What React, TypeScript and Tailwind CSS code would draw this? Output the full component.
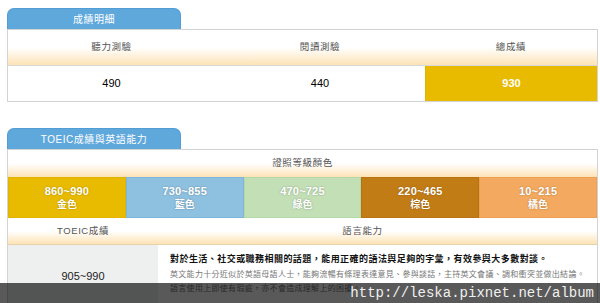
import React from "react";

const cjk = { fontFamily: '"Liberation Sans", "Noto Sans CJK TC", sans-serif' };

const headerBg =
  "bg-[linear-gradient(to_bottom,#ffffff_0%,#ffffff_50%,#fde3b6_100%)]";

function Tab({ label }: { label: string }) {
  return (
    <div className="w-[174px] h-[21px] rounded-t-[7px] bg-[#5fa8dc] border border-b-0 border-[#529dd6] flex items-center justify-center text-white text-[10px] tracking-[0.5px]">
      {label}
    </div>
  );
}

const levels = [
  { range: "860~990", name: "金色", bg: "bg-[#e9bb00]", br: "border-[#e2b300]" },
  { range: "730~855", name: "藍色", bg: "bg-[#8ec0e0]", br: "border-[#7fb5db]" },
  { range: "470~725", name: "綠色", bg: "bg-[#c2dfb6]", br: "border-[#b3d9a6]" },
  { range: "220~465", name: "棕色", bg: "bg-[#c27c15]", br: "border-[#b87212]" },
  { range: "10~215", name: "橘色", bg: "bg-[#f3a95f]", br: "border-[#eea052]" },
];

export default function App() {
  return (
    <div
      className="relative w-[600px] h-[303px] overflow-hidden bg-white pl-[7px] pr-[2px] pt-[8px]"
      style={cjk}
    >
      {/* Section 1 */}
      <Tab label="成績明細" />
      <div className="border border-[#d3d3d3] flex flex-col">
        <div className={`grid grid-cols-[207px_210px_1fr] h-[36px] ${headerBg} border-b border-[#d8d8d8] text-[#555] text-[9.5px] tracking-[0.6px]`}>
          <div className="flex items-center justify-center">聽力測驗</div>
          <div className="flex items-center justify-center">閱讀測驗</div>
          <div className="flex items-center justify-center">總成績</div>
        </div>
        <div className="grid grid-cols-[207px_210px_1fr] h-[35px] text-[11px] text-black">
          <div className="flex items-center justify-center">490</div>
          <div className="flex items-center justify-center">440</div>
          <div className="flex items-center justify-center bg-[#e9bb00] border-l border-[#e0b300] text-white font-bold text-[11px]">
            930
          </div>
        </div>
      </div>

      {/* Section 2 */}
      <div className="mt-[26px]">
        <Tab label="TOEIC成績與英語能力" />
        <div className="border border-[#d3d3d3] flex flex-col">
          <div className={`h-[27px] ${headerBg} flex items-center justify-center text-[#555] text-[9.5px] tracking-[0.6px]`}>
            證照等級顏色
          </div>
          <div className="grid grid-cols-5 h-[41px]">
            {levels.map((l) => (
              <div
                key={l.range}
                className={`${l.bg} border ${l.br} flex flex-col items-center justify-center text-white font-bold leading-[13px] [text-shadow:0_0_2px_rgba(0,0,0,0.3)]`}
              >
                <div className="text-[11px] tracking-[0.2px]">{l.range}</div>
                <div className="text-[10px]">{l.name}</div>
              </div>
            ))}
          </div>
          <div className={`grid grid-cols-[150px_1fr] h-[27px] ${headerBg} border-b border-[#e8d2ac] text-[#555] text-[9.5px] tracking-[0.6px]`}>
            <div className="flex items-center justify-center">TOEIC成績</div>
            <div className="flex items-center justify-center pr-[30px]">語言能力</div>
          </div>
          <div className="grid grid-cols-[150px_1fr] h-[62px]">
            <div className="bg-[#eeefef] flex items-center justify-center text-[11px] text-[#222]">
              905~990
            </div>
            <div className="pl-[12px] pt-[7px] flex flex-col">
              <div className="text-[9px] font-bold text-[#111] tracking-[0.45px] leading-[14px]">
                對於生活、社交或職務相關的話題，能用正確的語法與足夠的字彙，有效參與大多數對談。
              </div>
              <div className="text-[8px] text-[#777] tracking-[0.3px] leading-[14px] mt-[2px]">
                英文能力十分近似於英語母語人士，能夠流暢有條理表達意見、參與談話，主持英文會議、調和衝突並做出結論。
              </div>
              <div className="text-[8px] text-[#777] tracking-[0.3px] leading-[14px]">
                語言使用上即使有瑕疵，亦不會造成理解上的困擾。
              </div>
            </div>
          </div>
        </div>
      </div>

      {/* Watermark overlay */}
      <div className="absolute left-0 right-0 bottom-0 h-[20px] bg-black/65 flex items-center justify-end pr-[6px]">
        <span
          className="text-[#f0f0f0] text-[14px] leading-none"
          style={{ fontFamily: '"Liberation Mono", monospace' }}
        >
          http://leska.pixnet.net/album
        </span>
      </div>
    </div>
  );
}
